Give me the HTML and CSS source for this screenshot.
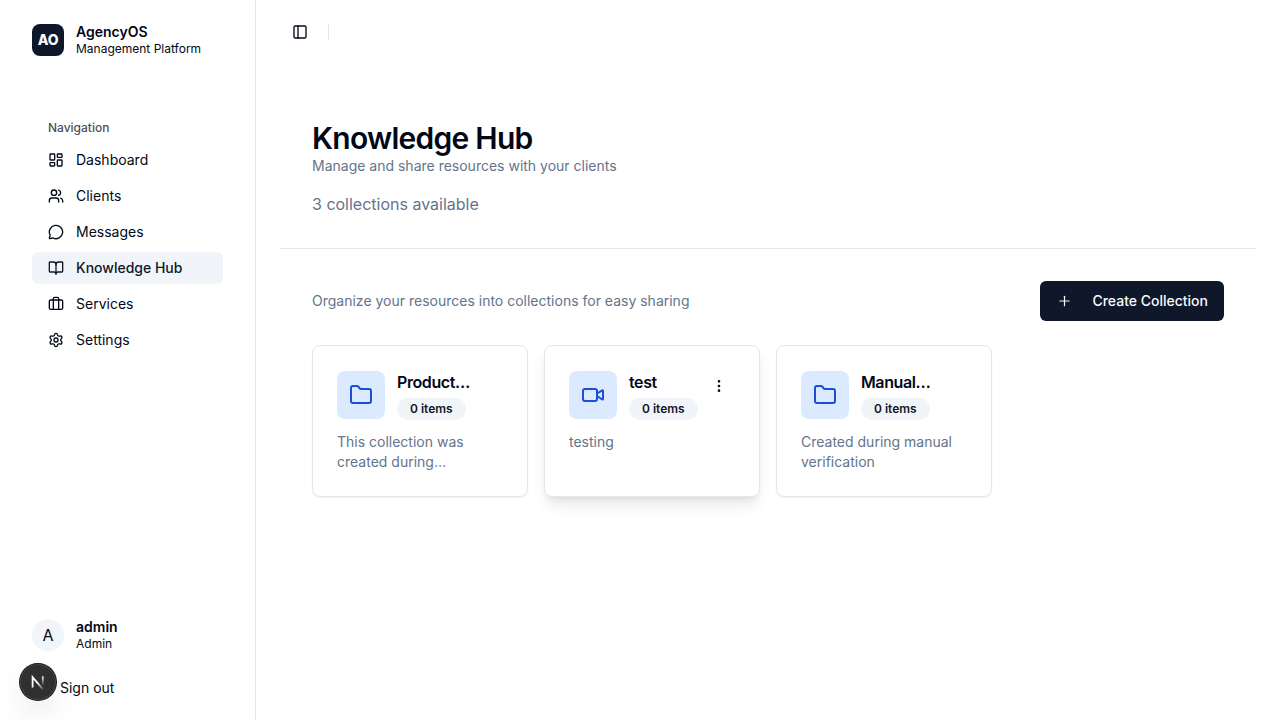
FILE: index.html
```html
<!DOCTYPE html>
<html lang="en">
<head>
<meta charset="utf-8">
<title>Knowledge Hub</title>
<link rel="stylesheet" href="styles.css">
</head>
<body>
<div class="app">
  <aside class="sidebar">
    <div class="brand">
      <div class="brand-logo">AO</div>
      <div class="stack">
        <span class="stack-title">AgencyOS</span>
        <span class="stack-sub">Management Platform</span>
      </div>
    </div>
    <nav class="nav">
      <div class="nav-label">Navigation</div>
      <a class="nav-item"><svg class="icon" viewBox="0 0 24 24"><rect width="7" height="9" x="3" y="3" rx="1"/><rect width="7" height="5" x="14" y="3" rx="1"/><rect width="7" height="9" x="14" y="12" rx="1"/><rect width="7" height="5" x="3" y="16" rx="1"/></svg>Dashboard</a>
      <a class="nav-item"><svg class="icon" viewBox="0 0 24 24"><path d="M16 21v-2a4 4 0 0 0-4-4H6a4 4 0 0 0-4 4v2"/><circle cx="9" cy="7" r="4"/><path d="M22 21v-2a4 4 0 0 0-3-3.87"/><path d="M16 3.13a4 4 0 0 1 0 7.75"/></svg>Clients</a>
      <a class="nav-item"><svg class="icon" viewBox="0 0 24 24"><path d="M2.992 16.342a2 2 0 0 1 .094 1.167l-1.065 3.29a1 1 0 0 0 1.236 1.168l3.413-.998a2 2 0 0 1 1.099.092 10 10 0 1 0-4.777-4.719"/></svg>Messages</a>
      <a class="nav-item active"><svg class="icon" viewBox="0 0 24 24"><path d="M12 7v14"/><path d="M3 18a1 1 0 0 1-1-1V4a1 1 0 0 1 1-1h5a4 4 0 0 1 4 4 4 4 0 0 1 4-4h5a1 1 0 0 1 1 1v13a1 1 0 0 1-1 1h-6a3 3 0 0 0-3 3 3 3 0 0 0-3-3z"/></svg>Knowledge Hub</a>
      <a class="nav-item"><svg class="icon" viewBox="0 0 24 24"><path d="M16 20V4a2 2 0 0 0-2-2h-4a2 2 0 0 0-2 2v16"/><rect width="20" height="14" x="2" y="6" rx="2"/></svg>Services</a>
      <a class="nav-item"><svg class="icon" viewBox="0 0 24 24"><path d="M9.671 4.136a2.34 2.34 0 0 1 4.659 0 2.34 2.34 0 0 0 3.319 1.915 2.34 2.34 0 0 1 2.33 4.033 2.34 2.34 0 0 0 0 3.831 2.34 2.34 0 0 1-2.33 4.033 2.34 2.34 0 0 0-3.319 1.915 2.34 2.34 0 0 1-4.659 0 2.34 2.34 0 0 0-3.32-1.915 2.34 2.34 0 0 1-2.33-4.033 2.34 2.34 0 0 0 0-3.831A2.34 2.34 0 0 1 6.35 6.051a2.34 2.34 0 0 0 3.319-1.915"/><circle cx="12" cy="12" r="3"/></svg>Settings</a>
    </nav>
    <div class="account">
      <div class="user">
        <div class="avatar">A</div>
        <div class="stack">
          <span class="stack-title">admin</span>
          <span class="stack-sub">Admin</span>
        </div>
      </div>
      <a class="sign-out">Sign out</a>
    </div>
  </aside>
  <main class="main">
    <header class="topbar">
      <svg class="icon" viewBox="0 0 24 24"><rect width="18" height="18" x="3" y="3" rx="2"/><path d="M9 3v18"/></svg>
      <span class="divider"></span>
    </header>
    <section class="page-head">
      <h1 class="title">Knowledge Hub</h1>
      <p class="subtitle">Manage and share resources with your clients</p>
      <p class="count">3 collections available</p>
    </section>
    <section class="content">
      <div class="toolbar">
        <p class="hint">Organize your resources into collections for easy sharing</p>
        <button class="create"><svg class="icon" viewBox="0 0 24 24"><path d="M5 12h14"/><path d="M12 5v14"/></svg>Create Collection</button>
      </div>
      <div class="cards">
        <article class="card">
          <div class="card-head">
            <div class="card-icon"><svg class="icon large" viewBox="0 0 24 24"><path d="M20 20a2 2 0 0 0 2-2V8a2 2 0 0 0-2-2h-7.9a2 2 0 0 1-1.69-.9L9.6 3.9A2 2 0 0 0 7.93 3H4a2 2 0 0 0-2 2v13a2 2 0 0 0 2 2Z"/></svg></div>
            <div class="card-info"><h3 class="card-title">Product…</h3><span class="badge">0 items</span></div>
          </div>
          <p class="card-text">This collection was<br>created during…</p>
        </article>
        <article class="card raised">
          <div class="card-head">
            <div class="card-icon"><svg class="icon large" viewBox="0 0 24 24"><path d="m16 13 5.223 3.482a.5.5 0 0 0 .777-.416V7.87a.5.5 0 0 0-.752-.432L16 10.5"/><rect x="2" y="6" width="14" height="12" rx="2"/></svg></div>
            <div class="card-info"><h3 class="card-title">test</h3><span class="badge">0 items</span></div>
            <div class="more"><svg class="icon" viewBox="0 0 24 24"><circle cx="12" cy="12" r="1"/><circle cx="12" cy="5" r="1"/><circle cx="12" cy="19" r="1"/></svg></div>
          </div>
          <p class="card-text">testing</p>
        </article>
        <article class="card">
          <div class="card-head">
            <div class="card-icon"><svg class="icon large" viewBox="0 0 24 24"><path d="M20 20a2 2 0 0 0 2-2V8a2 2 0 0 0-2-2h-7.9a2 2 0 0 1-1.69-.9L9.6 3.9A2 2 0 0 0 7.93 3H4a2 2 0 0 0-2 2v13a2 2 0 0 0 2 2Z"/></svg></div>
            <div class="card-info"><h3 class="card-title">Manual…</h3><span class="badge">0 items</span></div>
          </div>
          <p class="card-text">Created during manual<br>verification</p>
        </article>
      </div>
    </section>
  </main>
</div>
<div class="dev-badge">
  <svg class="dev-mark" viewBox="0 0 36 36" fill="none">
    <defs>
      <linearGradient id="stem" x1="0" y1="12" x2="0" y2="22" gradientUnits="userSpaceOnUse"><stop stop-color="#fff"/><stop offset="1" stop-color="#fff" stop-opacity="0"/></linearGradient>
      <linearGradient id="diag" x1="18" y1="18" x2="24" y2="25" gradientUnits="userSpaceOnUse"><stop stop-color="#fff"/><stop offset="1" stop-color="#fff" stop-opacity="0.1"/></linearGradient>
    </defs>
    <path d="M12.6 23.5V13.2L23 25.3" stroke="url(#diag)" stroke-width="1.8"/>
    <path d="M22.8 12.3v10.5" stroke="url(#stem)" stroke-width="1.7"/>
  </svg>
</div>
</body>
</html>
```
FILE: styles.css
```css
* { box-sizing: border-box; }
body {
  margin: 0;
  font-family: Inter, "Liberation Sans", sans-serif;
  font-size: 14px;
  line-height: 20px;
  color: #020817;
  background: #fff;
}
h1, h3, p { margin: 0; }
.app { display: flex; height: 720px; overflow: hidden; }
.icon {
  width: 16px;
  height: 16px;
  flex: none;
  fill: none;
  stroke: currentColor;
  stroke-width: 2;
  stroke-linecap: round;
  stroke-linejoin: round;
}
.icon.large { width: 24px; height: 24px; }

.sidebar {
  width: 256px;
  flex: none;
  display: flex;
  flex-direction: column;
  padding: 24px 32px 16px;
  border-right: 1px solid #e2e8f0;
}
.brand, .user { display: flex; align-items: center; gap: 12px; height: 32px; }
.brand-logo {
  width: 32px;
  height: 32px;
  border-radius: 8px;
  background: #0f172a;
  color: #f8fafc;
  font-weight: 800;
  letter-spacing: -0.2px;
  line-height: 32px;
  text-align: center;
}
.stack { display: flex; flex-direction: column; }
.stack-title { font-weight: 600; line-height: 17.5px; }
.stack-sub { font-size: 12px; line-height: 16px; }
.nav { display: flex; flex-direction: column; gap: 4px; margin-top: 56px; }
.nav-label {
  height: 32px;
  margin-bottom: -4px;
  padding: 0 16px;
  font-size: 12px;
  font-weight: 500;
  line-height: 32px;
  color: #4d515c;
}
.nav-item {
  display: flex;
  align-items: center;
  gap: 12px;
  height: 32px;
  padding: 0 16px;
  border-radius: 6px;
}
.nav-item.active { background: #f1f5f9; color: #0f172a; font-weight: 500; }
.account { display: flex; flex-direction: column; gap: 20.8px; margin-top: auto; }
.avatar {
  width: 32px;
  height: 32px;
  border-radius: 50%;
  background: #f1f5f9;
  font-size: 16px;
  line-height: 32px;
  text-align: center;
}
.sign-out { height: 32px; padding-left: 28px; line-height: 32px; }

.main { flex: 1; min-width: 0; display: flex; flex-direction: column; padding: 0 24px; }
.topbar { display: flex; align-items: center; gap: 20px; height: 64px; padding-left: 12px; }
.divider { width: 1px; height: 16px; background: #e2e8f0; }
.page-head {
  display: flex;
  flex-direction: column;
  height: 185px;
  padding: 56px 32px 0;
  border-bottom: 1px solid #e2e8f0;
}
.title { font-size: 30px; line-height: 36px; font-weight: 600; letter-spacing: -0.75px; }
.subtitle, .hint, .card-text { color: #64748b; }
.count { margin-top: 16px; font-size: 16px; line-height: 24px; color: #64748b; }
.content { padding: 32px; }
.toolbar { display: flex; align-items: center; justify-content: space-between; height: 40px; }
.create {
  display: flex;
  align-items: center;
  gap: 20px;
  height: 40px;
  padding: 0 16px;
  border: 0;
  border-radius: 6px;
  background: #0f172a;
  color: #f8fafc;
  font: 500 14px/20px Inter, "Liberation Sans", sans-serif;
}
.create .icon { stroke-width: 1.8; transform: translateX(0.5px); }
.cards { display: grid; grid-template-columns: repeat(4, 216px); gap: 16px; margin-top: 24px; }
.card {
  height: 152px;
  padding: 24px;
  border: 1px solid #e2e8f0;
  border-radius: 8px;
  background: #fff;
  box-shadow: 0 1px 2px rgba(0, 0, 0, 0.05);
}
.card.raised { box-shadow: 0 10px 15px -3px rgba(0, 0, 0, 0.1), 0 4px 6px -4px rgba(0, 0, 0, 0.1); }
.card-head { display: flex; align-items: center; gap: 12px; height: 50px; }
.card-icon {
  display: flex;
  align-items: center;
  justify-content: center;
  flex: none;
  width: 48px;
  height: 48px;
  border-radius: 8px;
  background: #dbeafe;
  color: #1d4ed8;
}
.card-info { display: flex; flex-direction: column; align-items: flex-start; flex: none; gap: 4px; }
.card-title { font-size: 16px; line-height: 24px; font-weight: 600; letter-spacing: -0.4px; }
.badge {
  height: 22px;
  padding: 0 13px;
  border-radius: 11px;
  background: #f1f5f9;
  color: #0f172a;
  font-size: 12px;
  line-height: 22px;
  font-weight: 600;
  white-space: nowrap;
}
.more {
  display: flex;
  justify-content: center;
  align-items: center;
  align-self: flex-start;
  flex: none;
  width: 19px;
  height: 32px;
}
.card-text { margin-top: 12px; }

.dev-badge {
  position: absolute;
  left: 20px;
  top: 664px;
  width: 36px;
  height: 36px;
  border-radius: 50%;
  background: #303030;
  box-shadow: 0 0 0 1px #171717, inset 0 0 0 1px #454545, 0 16px 32px -8px rgba(0, 0, 0, 0.24);
}
.dev-mark { display: block; width: 36px; height: 36px; }
```
